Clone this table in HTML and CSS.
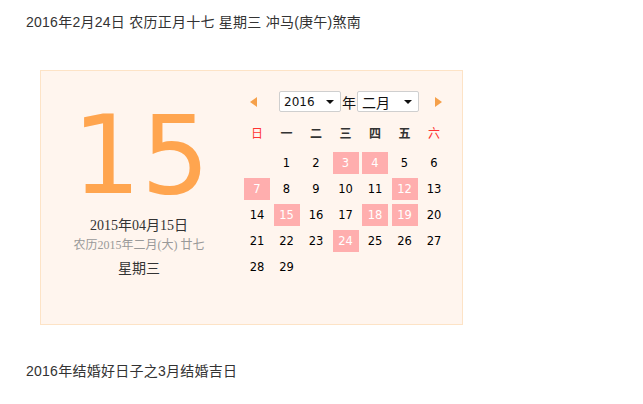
FILE: index.html
```html
<!DOCTYPE html>
<html lang="zh">
<head>
<meta charset="utf-8">
<link rel="stylesheet" href="styles.css">
</head>
<body>
<div class="page">
  <p class="line">2016年2月24日 农历正月十七 星期三 冲马(庚午)煞南</p>
  <div class="cal">
    <div class="left">
      <div class="big">15</div>
      <div class="date">2015年04月15日</div>
      <div class="lunar">农历2015年二月(大) 廿七</div>
      <div class="week">星期三</div>
    </div>
    <div class="right">
      <div class="head">
        <span class="arrow prev"></span>
        <div class="sel year"><span>2016</span><i></i></div>
        <span class="nian">年</span>
        <div class="sel month"><span>二月</span><i></i></div>
        <span class="arrow next"></span>
      </div>
      <div class="grid">
        <div class="wd red">日</div><div class="wd">一</div><div class="wd">二</div><div class="wd">三</div><div class="wd">四</div><div class="wd">五</div><div class="wd red">六</div>
        <div class="d"></div><div class="d">1</div><div class="d">2</div><div class="d hi">3</div><div class="d hi">4</div><div class="d">5</div><div class="d">6</div>
        <div class="d hi">7</div><div class="d">8</div><div class="d">9</div><div class="d">10</div><div class="d">11</div><div class="d hi">12</div><div class="d">13</div>
        <div class="d">14</div><div class="d hi">15</div><div class="d">16</div><div class="d">17</div><div class="d hi">18</div><div class="d hi">19</div><div class="d">20</div>
        <div class="d">21</div><div class="d">22</div><div class="d">23</div><div class="d hi">24</div><div class="d">25</div><div class="d">26</div><div class="d">27</div>
        <div class="d">28</div><div class="d">29</div><div class="d"></div><div class="d"></div><div class="d"></div><div class="d"></div><div class="d"></div>
      </div>
    </div>
  </div>
  <p class="line bottom">2016年结婚好日子之3月结婚吉日</p>
</div>
</body>
</html>
```
FILE: styles.css
```css
html, body { margin: 0; padding: 0; background: #fff; }
.page {
  padding: 12px 26px;
  font-family: "Liberation Sans", "Noto Sans CJK SC", sans-serif;
  color: #333;
}
.line { margin: 0; font-size: 14px; line-height: 20px; letter-spacing: 0.25px; }
.bottom { margin-top: 36px; }
.cal {
  margin: 38px 0 0 14px;
  width: 421px;
  height: 253px;
  background: #fff5ee;
  border: 1px solid #fde3c6;
  display: flex;
  box-sizing: content-box;
}
.left {
  width: 196px;
  display: flex;
  flex-direction: column;
  align-items: center;
  padding-top: 43px;
}
.big {
  font-family: "DejaVu Sans", sans-serif;
  font-size: 108px;
  line-height: 84px;
  color: #ffa54f;
  margin-left: 4px;
}
.date {
  margin-top: 19px;
  font-family: "Liberation Serif", "Noto Sans CJK SC", serif;
  font-size: 14px;
  line-height: 18px;
  color: #333;
}
.lunar {
  margin-top: 2px;
  font-size: 12px;
  line-height: 16px;
  color: #999;
  font-family: "Liberation Serif", "Noto Sans CJK SC", serif;
}
.week {
  margin-top: 6px;
  font-size: 14px;
  line-height: 18px;
  color: #333;
}
.right {
  margin-left: 7px;
  padding-top: 20px;
  width: 204px;
}
.head {
  display: flex;
  align-items: center;
  height: 21px;
}
.arrow { width: 0; height: 0; border-top: 5px solid transparent; border-bottom: 5px solid transparent; }
.prev { border-right: 7px solid #f5a04a; margin-left: 6px; margin-right: 22px; }
.next { border-left: 7px solid #f5a04a; margin-left: 16px; }
.sel {
  box-sizing: border-box;
  height: 21px;
  width: 62px;
  background: #fff;
  border: 1px solid #cfcfcf;
  border-radius: 2px;
  display: flex;
  align-items: center;
  justify-content: space-between;
  padding: 0 6px 0 4px;
  font-size: 13px;
  color: #111;
  font-family: "DejaVu Sans", "Noto Sans CJK SC", sans-serif;
}
.sel span { font-size: 12px; }
.month span { font-family: "Noto Sans CJK SC", sans-serif; font-size: 14px; }
.sel i { width: 0; height: 0; border-left: 4px solid transparent; border-right: 4px solid transparent; border-top: 4px solid #111; }
.nian { font-size: 14px; color: #111; margin: 0 1px; font-family: "Noto Sans CJK SC", sans-serif; }
.grid {
  margin-top: 10px;
  display: grid;
  grid-template-columns: repeat(7, 26px);
  column-gap: 3.5px;
  grid-template-rows: 26px repeat(5, 22px);
  row-gap: 4px;
}
.wd {
  text-align: center;
  font-size: 12px;
  line-height: 22px;
  font-weight: bold;
  color: #333;
  font-family: "Noto Sans CJK SC", sans-serif;
}
.wd.red { color: #f33; font-weight: normal; }
.d {
  text-align: center;
  font-family: "DejaVu Sans", sans-serif;
  font-size: 11.5px;
  line-height: 22px;
  color: #000;
}
.d.hi { background: #ffaeae; color: #fff; }
```
